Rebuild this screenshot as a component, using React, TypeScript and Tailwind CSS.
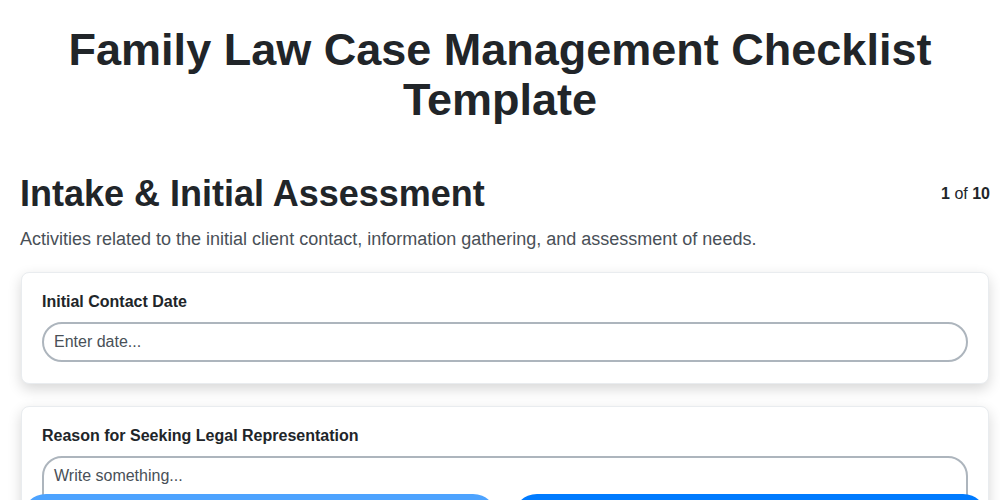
export default function App() {
  return (
    <div
      className="relative h-screen overflow-hidden bg-white text-[#212529]"
      style={{ fontFamily: '"Liberation Sans", Arial, sans-serif' }}
    >
      <div className="pt-[25px] pb-24">
        <h1 className="px-5 text-center text-[45px] font-bold leading-[50px]">
          Family Law Case Management Checklist Template
        </h1>

        <div className="pl-5 pr-[10px]">
          <div className="mt-[46px] flex items-start justify-between">
            <h2 className="text-[36px] font-bold leading-[46px]">Intake &amp; Initial Assessment</h2>
            <div className="mt-[11px] text-base">
              <span className="font-bold">1</span> of <span className="font-bold">10</span>
            </div>
          </div>
          <p className="mt-[9px] text-[18px] leading-[26px] text-[#495057]">
            Activities related to the initial client contact, information gathering, and assessment of needs.
          </p>

          <div className="mt-[20px] flex flex-col gap-[22px] px-px">
            <div className="rounded-lg border border-[#e9ecef] bg-white px-5 pb-[21px] pt-[19px] shadow-[0_5px_14px_rgba(0,0,0,0.16)]">
              <label className="block text-base font-bold leading-5">Initial Contact Date</label>
              <input
                type="text"
                placeholder="Enter date..."
                className="mt-[10px] block h-10 w-full rounded-full border-2 border-[#adb5bd] px-[10px] text-base text-[#212529] outline-none placeholder:text-[#495057]"
              />
            </div>

            <div className="rounded-lg border border-[#e9ecef] bg-white px-5 pb-[21px] pt-[19px] shadow-[0_5px_14px_rgba(0,0,0,0.16)]">
              <label className="block text-base font-bold leading-5">Reason for Seeking Legal Representation</label>
              <textarea
                placeholder="Write something..."
                rows={4}
                className="mt-[10px] block w-full resize-none rounded-[20px] border-2 border-[#adb5bd] px-[10px] py-[6px] text-base leading-6 text-[#212529] outline-none placeholder:text-[#495057]"
              />
            </div>
          </div>
        </div>
      </div>

      {/* bottom nav, pinned over the content */}
      <div className="absolute inset-x-0 top-[494px] flex gap-4 pl-[22px] pr-[13px]">
        <button className="h-12 flex-1 rounded-full bg-[#4da3ff] pt-6 text-white font-bold">Previous</button>
        <button className="h-12 flex-1 rounded-full bg-[#007bff] pt-6 text-white font-bold">Next</button>
      </div>
    </div>
  );
}
